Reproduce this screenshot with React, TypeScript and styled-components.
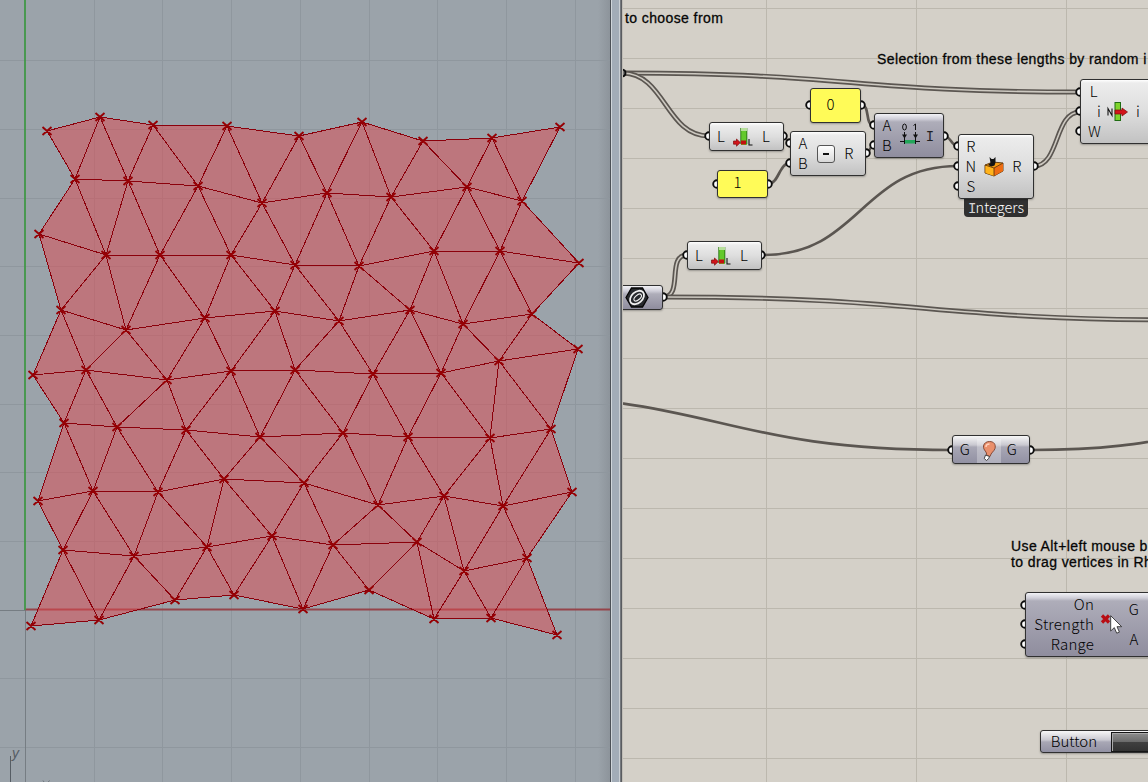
import React from 'react';
import styled, { createGlobalStyle, css } from 'styled-components';

const GlobalStyle = createGlobalStyle`
  body { margin: 0; overflow: hidden; }
  #root { height: 782px; }
`;

const Workspace = styled.main`
  display: flex;
  width: 1148px;
  height: 782px;
  overflow: hidden;
`;

const Viewport = styled.section`
  flex: 0 0 610px;
  height: 100%;
  position: relative;
  background: linear-gradient(90deg, #9ba3aa 0, #9ba3aa 598px, #8d949b 610px);
`;

const Drawing = styled.svg`
  display: block;
  width: 100%;
  height: 100%;
`;

const AxisLabel = styled.span<{ $x: number; $y: number }>`
  position: absolute;
  left: ${(p) => p.$x}px;
  top: ${(p) => p.$y}px;
  font: italic 14px/14px 'Liberation Sans', sans-serif;
  color: #565d64;
`;

const Splitter = styled.div`
  flex: 0 0 13px;
  box-sizing: border-box;
  background: linear-gradient(
    90deg,
    #4b5056 0 1px, #cfd5da 1px 2px, #a2acb7 2px 9px, #c9ced3 9px 10px, #74787d 10px 11px, #5a5c60 11px 12px, #c1beb7 12px 13px
  );
`;

const Canvas = styled.section`
  position: relative;
  flex: 1;
  overflow: hidden;
  background: #d4d0c8;
  color: #000;
  font-family: 'Noto Sans CJK JP', 'Noto Sans', sans-serif;
`;

const WireLayer = styled.svg`
  position: absolute;
  inset: 0;
  width: 100%;
  height: 100%;
`;

const CANVAS_LEFT = 623;

const at = css<{ $x: number; $y: number }>`
  position: absolute;
  left: ${(p) => p.$x - CANVAS_LEFT}px;
  top: ${(p) => p.$y}px;
`;

const Note = styled.p<{ $x: number; $y: number }>`
  ${at}
  margin: 0;
  font: 14px/16px 'Liberation Sans', Arial, sans-serif;
  letter-spacing: 0.4px;
  -webkit-text-stroke: 0.3px #111;
  white-space: pre;
`;

const tones = {
  light: 'linear-gradient(#ffffff 0, #ececec 3px, #dedede 50%, #c2c2c2 100%)',
  muted: 'linear-gradient(#f2f2f6 0, #cfced8 5px, #aeadb9 8px, #8f8d9e 100%)',
  short: 'linear-gradient(#f7f7f7 0, #c9c8d0 9px, #a8a7b5 11px, #9291a3 100%)',
};

const Node = styled.div<{ $x: number; $y: number; $w: number; $h: number; $tone?: keyof typeof tones }>`
  ${at}
  box-sizing: border-box;
  width: ${(p) => p.$w}px;
  height: ${(p) => p.$h}px;
  display: flex;
  align-items: center;
  border: 1.4px solid #303030;
  border-radius: 3px;
  background: ${(p) => tones[p.$tone ?? 'light']};
  box-shadow: 0 1px 2px rgba(0, 0, 0, 0.28);
`;

const Ports = styled.div<{ $w: number; $row?: number; $align?: string }>`
  flex: 0 0 ${(p) => p.$w}px;
  display: flex;
  flex-direction: column;
  margin-top: -2px;
  text-align: ${(p) => p.$align ?? 'center'};
  font-size: 15px;
  font-weight: 300;
  letter-spacing: 0.2px;

  span {
    height: ${(p) => p.$row ?? 20}px;
    line-height: ${(p) => p.$row ?? 20}px;
    white-space: nowrap;
  }
`;

const NodeCaption = styled.div`
  flex: 0 0 70px;
  padding-right: 4px;
  box-sizing: border-box;
  text-align: center;
  font-size: 15px;
  font-weight: 300;
  line-height: 20px;
  margin-top: -2px;
`;

const SlabLetter = styled.b`
  font: 400 14px/1 'Liberation Mono', monospace;
  letter-spacing: -0.8px;
  opacity: 0.8;
`;

const Icon = styled.svg<{ $left?: number }>`
  flex: none;
  width: 24px;
  height: 24px;
  overflow: visible;
  margin-left: ${(p) => p.$left ?? 0}px;
`;

const Panel = styled(Node)`
  justify-content: center;
  padding-right: 10px;
  padding-bottom: 4px;
  background: #fffb58;
  font: 300 15px/20px 'Noto Sans CJK JP', sans-serif;
`;

const Tag = styled.div<{ $x: number; $y: number }>`
  ${at}
  width: 64px;
  height: 18px;
  border-radius: 0 0 4px 4px;
  background: #303030;
  color: #fff;
  text-align: center;
  font-size: 14.5px;
  font-weight: 300;
  line-height: 15px;
  white-space: nowrap;
`;

const MinusKey = styled.div`
  box-sizing: border-box;
  width: 18px;
  height: 18px;
  margin-left: 2px;
  margin-right: 7px;
  display: flex;
  align-items: center;
  justify-content: center;
  border: 1px solid #555;
  border-radius: 3px;
  background: linear-gradient(#fff, #d8d8d8);

  &::after {
    content: '';
    width: 6px;
    height: 2px;
    background: #111;
  }
`;

const PushButton = styled.div`
  flex: none;
  box-sizing: border-box;
  width: 60px;
  height: 20px;
  border: 1.5px solid #161616;
  box-shadow: inset 1px 1px 0 #aaa;
  background: linear-gradient(#8d8d8d 0, #6b6b6b 48%, #404040 52%, #333 100%);
`;

const Cursor = styled.svg<{ $x: number; $y: number }>`
  ${at}
  width: 14px;
  height: 20px;
`;

type Pt = [number, number];

const rows: Pt[][] = [
  [[47, 131], [100, 117], [153, 125], [227, 126], [299, 136], [362, 122], [423, 141], [492, 138], [560, 127]],
  [[75, 179], [128, 181], [198, 186], [262, 203], [327, 193], [391, 197], [467, 187], [522, 201]],
  [[39, 234], [106, 255], [160, 255], [231, 255], [295, 265], [359, 266], [434, 251], [500, 251], [579, 263]],
  [[61, 310], [126, 330], [205, 318], [275, 311], [339, 321], [410, 310], [463, 324], [532, 314]],
  [[33, 375], [86, 370], [167, 380], [231, 371], [295, 370], [373, 374], [441, 373], [499, 361], [578, 349]],
  [[64, 423], [117, 427], [186, 430], [260, 437], [343, 433], [408, 437], [490, 438], [551, 429]],
  [[38, 501], [93, 491], [158, 492], [224, 479], [304, 483], [378, 505], [444, 496], [503, 506], [572, 492]],
  [[63, 550], [134, 556], [207, 547], [272, 536], [333, 545], [417, 542], [464, 571], [527, 558]],
  [[31, 626], [99, 620], [175, 600], [234, 595], [303, 609], [369, 590], [434, 619], [491, 618], [557, 635]],
];

const outline = [
  ...rows[0],
  ...rows.slice(1, -1).map((r) => r[r.length - 1]),
  ...[...rows[8]].reverse(),
  ...rows.slice(1, -1).map((r) => r[0]).reverse(),
];

const polyline = (pts: Pt[]) => 'M' + pts.map((p) => p.join(' ')).join('L');

const diagonals = rows.flatMap((row, r) =>
  r % 2 === 0
    ? []
    : row.flatMap((p, i) => [rows[r - 1], rows[r + 1]].map((n) => polyline([n[i], p, n[i + 1]]))),
);

const meshPath = [...rows.map(polyline), ...diagonals].join('');
const markerPath = rows.flat().map(([x, y]) => `M${x - 4.5} ${y - 4}l9 8m0-8l-9 8`).join('');

const gridX = [94.5, 162.5, 231.5, 300.5, 369.5, 437.5, 506.5, 575.5];
const gridY = [60.5, 129.5, 198.5, 266.5, 335.5, 404.5, 472.5, 541.5, 678.5, 747.5];

function Mesh() {
  return (
    <Drawing viewBox="0 0 610 782">
      <path
        d={gridX.map((x) => `M${x} 0V782`).join('') + gridY.map((y) => `M0 ${y}H610`).join('')}
        stroke="#8f979e"
      />
      <path d="M25.5 610V782M0 610.5H25" stroke="#767d83" />
      <path d="M25.5 609.5H610" stroke="#95444a" strokeWidth="2" />
      <path d="M25 0V610" stroke="#419747" strokeWidth="1.8" />
      <path d={polyline(outline) + 'Z'} fill="rgba(223,73,79,.5)" />
      <path d={meshPath} fill="none" stroke="#8b000b" strokeWidth="1" shapeRendering="crispEdges" />
      <path d={markerPath} stroke="#960004" strokeWidth="1.9" />
      <path d="M10.5 756V782" stroke="#565d64" />
      <path d="M43 780.500l1 1.500M49.500 780.500l-1.200 1.500" stroke="#6b7279" />
    </Drawing>
  );
}

type WireSpec = { d: [number, number, number, number]; double?: boolean };

const wires: WireSpec[] = [
  { d: [622, 73, 1080, 92], double: true },
  { d: [622, 73, 709, 136], double: true },
  { d: [783, 136, 790, 143] },
  { d: [768, 184, 790, 163] },
  { d: [866, 153, 874, 145] },
  { d: [861, 105, 874, 125] },
  { d: [944, 136, 958, 146] },
  { d: [763, 255, 958, 166] },
  { d: [1034, 166, 1080, 112], double: true },
  { d: [663, 297, 687, 255], double: true },
  { d: [663, 297, 1190, 320], double: true },
  { d: [485, 395, 952, 450] },
  { d: [1032, 450, 1330, 422] },
];

const ports: Pt[] = [
  [1080, 92], [1080, 111], [1080, 131], [709, 136], [783, 136], [790, 143], [790, 163],
  [810, 105], [861, 105], [717, 184], [768, 184], [866, 153], [874, 125], [874, 145], [944, 136],
  [958, 146], [958, 166], [958, 186], [1034, 166], [687, 255], [761, 255], [663, 297],
  [952, 450], [1030, 450], [1025, 605], [1025, 624], [1025, 644],
];

function bezier([x0, y0, x1, y1]: WireSpec['d']) {
  const reach = Math.max((x1 - x0) / 2, Math.min(Math.abs(y1 - y0) / 2, 26));
  return `M${x0} ${y0}C${x0 + reach} ${y0} ${x1 - reach} ${y1} ${x1} ${y1}`;
}

function Wires() {
  const gridV = [766.5, 916.5, 1066.5];
  const gridH = Array.from({ length: 16 }, (_, i) => 8.5 + i * 50);
  return (
    <WireLayer viewBox="623 0 525 782">
      <path
        d={gridV.map((x) => `M${x} 0V782`).join('') + gridH.map((y) => `M623 ${y}H1148`).join('')}
        stroke="#bcb8ae"
      />
      <g fill="none">
        {wires.map((w, i) => (
          <g key={i}>
            <path d={bezier(w.d)} stroke="#5b5651" strokeWidth={w.double ? 5 : 2.7} />
            {w.double && <path d={bezier(w.d)} stroke="#cdc9c1" strokeWidth="1.6" />}
          </g>
        ))}
      </g>
      <g fill="#fff" stroke="#0c0c0c" strokeWidth="1.9">
        {ports.map(([x, y]) => (
          <circle key={`${x}-${y}`} cx={x} cy={y} r="3.8" />
        ))}
      </g>
      <circle cx="622" cy="73" r="3.500" fill="#777" stroke="#0c0c0c" strokeWidth="1.900" />
    </WireLayer>
  );
}

function ListLengthIcon() {
  return (
    <Icon viewBox="0 0 24 24">
      <rect x="9" y="3" width="6" height="17" fill="#63c92b" />
      <path d="M8.8 3v16M14.8 3v16" stroke="#2f7d18" strokeWidth="1" />
      <path d="M9 3h6v3h-6z" fill="#b7df9a" />
      <path d="M9 15.500h5v4h-5z" fill="#c40f0f" />
      <path d="M1.500 16h3v-2l3.800 3.600-3.800 3.600v-2h-3z" fill="#d3141b" stroke="#7c0b0b" strokeWidth=".7" />
      <path d="M17 14v6h3.500" fill="none" stroke="#111" strokeWidth="1.1" />
    </Icon>
  );
}

function ListLength({ x, y }: { x: number; y: number }) {
  return (
    <Node $x={x} $y={y} $w={74.5} $h={29}>
      <Ports $w={22}><span>L</span></Ports>
      <ListLengthIcon />
      <Ports $w={20}><span>L</span></Ports>
    </Node>
  );
}

export default function App() {
  return (
    <>
      <GlobalStyle />
      <Workspace>
        <Viewport>
          <Mesh />
          <AxisLabel $x={12} $y={746}>y</AxisLabel>
        </Viewport>
        <Splitter />
        <Canvas>
          <Wires />
          <Note $x={625} $y={10}>to choose from</Note>
          <Note $x={877} $y={51}>Selection from these lengths by random i</Note>
          <Note $x={1011} $y={538}>{'Use Alt+left mouse b\nto drag vertices in Rh'}</Note>

          <ListLength x={709} y={122} />
          <ListLength x={687} y={241} />
          <Panel $x={810} $y={88} $w={51} $h={35}>0</Panel>
          <Panel $x={717} $y={170} $w={51} $h={28}>1</Panel>

          <Node $x={790} $y={131} $w={76} $h={45}>
            <Ports $w={24}><span>A</span><span>B</span></Ports>
            <MinusKey />
            <Ports $w={14}><span>R</span></Ports>
          </Node>

          <Node $x={874} $y={113} $w={70} $h={45} $tone="muted">
            <Ports $w={24}><span>A</span><span>B</span></Ports>
            <Icon viewBox="0 0 24 24">
              <g fill="none" stroke="#111" strokeWidth="1">
                <ellipse cx="5.500" cy="3" rx="1.900" ry="3" />
                <path d="M14.500 1.500l2-1.500v6M5.500 8v8M16.500 8v8M1 17.500h20M5.500 15v5M16.500 15v5" />
              </g>
              <path d="M3 10.500h5l-2.500 4zM14 10.500h5l-2.500 4z" fill="#111" />
              <rect x="6" y="16" width="10" height="3.500" fill="#23a65a" />
            </Icon>
            <Ports $w={13}><span><SlabLetter>I</SlabLetter></span></Ports>
          </Node>

          <Tag $x={964} $y={199}><SlabLetter>I</SlabLetter>ntegers</Tag>
          <Node $x={958} $y={134} $w={76} $h={65}>
            <Ports $w={24}><span>R</span><span>N</span><span>S</span></Ports>
            <Icon viewBox="0 0 24 24">
              <path d="M2 10l8-3 10 1v8l-9 5-9-3z" fill="#f59b13" stroke="#57310a" strokeWidth=".9" />
              <path d="M11 13l9-5v8l-9 5z" fill="#ee6c12" />
              <path d="M2.500 10.500l8.500 2.500v8l-8.500-3z" fill="#ffb31c" />
              <path d="M2 10l9 3 9-5M11 13v8" fill="none" stroke="#57310a" strokeWidth=".8" />
              <path d="M5 10l2.500-2-1-6 2 2h2l2-2v5.500l-1 3-3 1z" fill="#131313" />
            </Icon>
            <Ports $w={20}><span>R</span></Ports>
          </Node>

          <Node $x={1080} $y={79} $w={90} $h={65}>
            <Ports $w={20} $align="right"><span>L&thinsp;</span><span>i</span><span>W</span></Ports>
            <Icon viewBox="0 0 24 24" $left={4}>
              <path d="M3 15.500v-7l4 7v-7" fill="none" stroke="#111" strokeWidth="1.100" />
              <rect x="10" y="2.500" width="5.500" height="18" fill="#7fd42c" stroke="#1f6c12" />
              <path d="M10 10h7V8l5.500 4-5.500 4v-2h-7z" fill="#d3141b" stroke="#7c0b0b" strokeWidth=".7" />
            </Icon>
            <Ports $w={18}><span>i</span></Ports>
          </Node>

          <Node $x={615} $y={285} $w={48} $h={25} $tone="muted">
            <Icon viewBox="0 0 24 24" $left={9}>
              <path d="M1 11.500L6.500 2h11l5.500 9.500-5.500 9.500h-11z" fill="#27292d" stroke="#050505" strokeWidth="1.300" />
              <g fill="none" stroke="#eee" transform="rotate(-42 12 11.500)">
                <ellipse cx="12" cy="11.500" rx="8" ry="5.500" strokeWidth="1.800" />
                <ellipse cx="12.500" cy="12" rx="4.500" ry="2.300" strokeWidth="1.100" />
              </g>
            </Icon>
          </Node>

          <Node $x={952} $y={435} $w={78} $h={29} $tone="short">
            <Ports $w={24}><span>G</span></Ports>
            <Icon viewBox="0 0 24 24">
              <rect y="1" width="24" height="24" fill="#fff" opacity=".28" />
              <path d="M9.500 17.500c1-4-3.500-5-3-9.500C7 5 9.500 3.500 12.500 3.500c4.500 0 6.500 3 5.500 7-1 3-4 4-5 8z" fill="#e98f6c" stroke="#7d402d" strokeWidth=".9" />
              <path d="M9 9c0-2 1.500-3 3.500-3" stroke="#ffd1bd" strokeWidth="1.500" fill="none" />
              <path d="M8.500 17l4 1.500-.8 2-2.200 2-2.200-2z" fill="#fff" stroke="#333" strokeWidth=".9" />
            </Icon>
            <Ports $w={22}><span>G</span></Ports>
          </Node>

          <Node $x={1025} $y={592} $w={150} $h={65} $tone="muted">
            <Ports $w={68} $align="right"><span>On</span><span>Strength</span><span>Range</span></Ports>
            <Icon viewBox="0 0 24 24">
              <path d="M8 2.500l7 7M15 2.500l-7 7" stroke="#b80d14" strokeWidth="3.200" />
            </Icon>
            <Ports $w={32} $row={30}><span>G</span><span>A</span></Ports>
          </Node>

          <Node $x={1040} $y={730} $w={150} $h={23} $tone="short">
            <NodeCaption>Button</NodeCaption>
            <PushButton />
          </Node>

          <Cursor $x={1110} $y={615} viewBox="0 0 14 20">
            <path d="M.7.700v15.300l3.600-3.400 2.400 5.600 2.700-1.100-2.400-5.400h4.700z" fill="#fff" stroke="#333" strokeWidth=".9" />
          </Cursor>
        </Canvas>
      </Workspace>
    </>
  );
}
